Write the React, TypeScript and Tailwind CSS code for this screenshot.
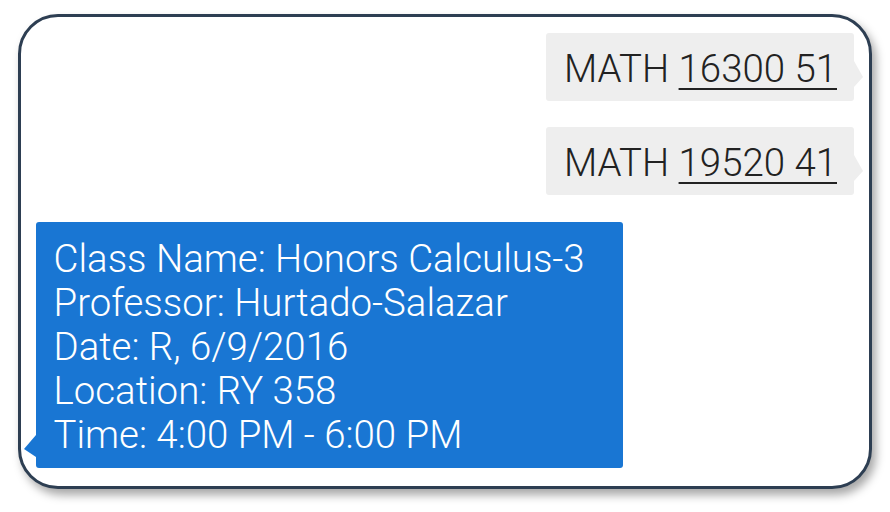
import React from 'react';

const Outgoing = ({ label, num }: { label: string; num: string }) => (
  <div className="relative self-end mr-[15px]">
    <div className="bg-[#eeeeee] rounded-[3px] pl-[18px] pr-[17px] pt-[14px] pb-[10px] text-[#222222]">
      {label} <span className="underline underline-offset-[6px] decoration-[2px]">{num}</span>
    </div>
    <svg className="absolute left-full top-[28px]" width="10" height="26" viewBox="0 0 10 26">
      <polygon points="0,0 9,16 0,26" fill="#eeeeee" />
    </svg>
  </div>
);

export default function App() {
  const lines = [
    'Class Name: Honors Calculus-3',
    'Professor: Hurtado-Salazar',
    'Date: R, 6/9/2016',
    'Location: RY 358',
    'Time: 4:00 PM - 6:00 PM',
  ];
  return (
    <div className="w-[890px] h-[512px] bg-white pt-[14px] pl-[18px]">
      <div
        className="w-[854px] h-[475px] rounded-[40px] border-[3.5px] border-[#2d3e52] bg-white shadow-[4px_6px_10px_rgba(0,0,0,0.35)] flex flex-col pt-[15.5px] text-[38.4px] font-light leading-[44px]"
        style={{ fontFamily: 'Roboto, "Liberation Sans", sans-serif' }}
      >
        <Outgoing label="MATH" num="16300 51" />
        <div className="h-[26px]" />
        <Outgoing label="MATH" num="19520 41" />
        <div className="h-[27px]" />
        <div className="relative self-start ml-[14.5px]">
          <div className="bg-[#1976d3] rounded-[3px] w-[587px] pl-[18px] pt-[15px] pb-[11px] text-white">
            {lines.map((l) => (
              <div key={l}>{l}</div>
            ))}
          </div>
          <svg className="absolute right-full top-[213px]" width="12" height="22" viewBox="0 0 12 22">
            <polygon points="12,0 0,14 12,22" fill="#1976d3" />
          </svg>
        </div>
      </div>
    </div>
  );
}
